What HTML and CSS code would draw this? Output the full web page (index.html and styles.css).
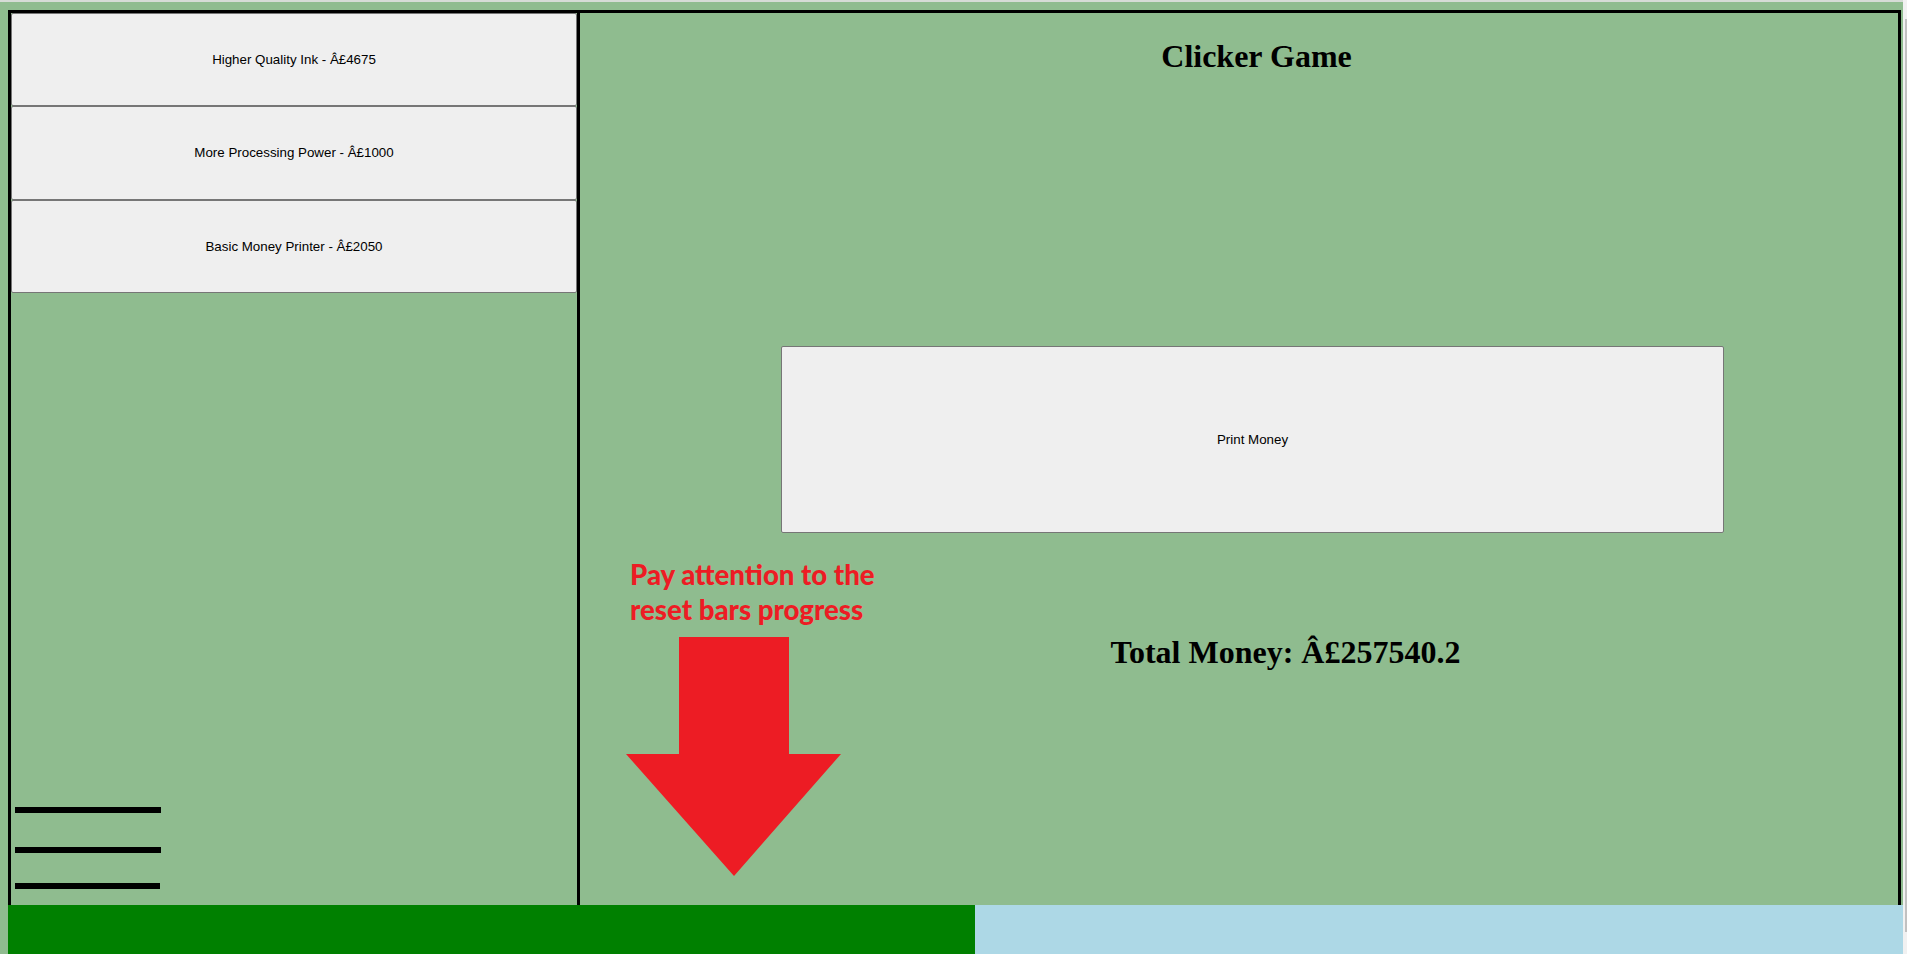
FILE: index.html
```html
<!DOCTYPE html>
<html lang="en">
<head>
<meta charset="utf-8">
<title>Clicker Game</title>
<link rel="stylesheet" href="styles.css">
</head>
<body>
  <div class="viewport">
    <div class="game">
      <div class="shop">
        <button class="upgrade">Higher Quality Ink - Â£4675</button>
        <button class="upgrade">More Processing Power - Â£1000</button>
        <button class="upgrade">Basic Money Printer - Â£2050</button>
        <div class="lines">
          <div class="line l1"></div>
          <div class="line l2"></div>
          <div class="line l3"></div>
        </div>
      </div>
      <div class="main">
        <h1 class="title">Clicker Game</h1>
        <button class="print">Print Money</button>
        <h1 class="total">Total Money: Â£257540.2</h1>
      </div>
    </div>
    <div class="bars">
      <div class="bar-done"></div>
      <div class="bar-rest"></div>
    </div>
  </div>
  <div class="scrollbar"><div class="thumb"></div></div>

  <div class="note">Pay attention to the<br>reset bars progress</div>
  <svg class="arrow" width="230" height="250" viewBox="0 0 230 250">
    <polygon points="59,7 169,7 169,124 221,124 114,246 6,124 59,124" fill="#ed1c24"/>
  </svg>
</body>
</html>
```

FILE: styles.css
```css
html, body {
  margin: 0;
  padding: 0;
  height: 954px;
  overflow: hidden;
}

body {
  position: relative;
  display: flex;
  background: #8fbc8f;
  font-family: "Liberation Serif", "Times New Roman", serif;
}

.viewport {
  flex: 1;
  display: flex;
  flex-direction: column;
  border-top: 2px solid #d6dcd6;
  padding: 8px 0 0 8px;
  box-sizing: border-box;
}

.game {
  display: flex;
  width: 1893px;
  height: 895px;
}

.shop {
  width: 572px;
  box-sizing: border-box;
  border: 3px solid #000;
  border-bottom: 0;
  display: flex;
  flex-direction: column;
}

.upgrade {
  height: 93.33px;
  width: 100%;
  margin: 0;
  padding: 0;
  background: #efefef;
  border: 1px solid #767676;
  border-radius: 2px;
  font-family: "Liberation Sans", Arial, sans-serif;
  font-size: 13.33px;
  color: #000;
}

.lines {
  margin-top: auto;
  padding: 0 0 16px 4px;
}

.line {
  width: 146px;
  height: 6px;
  background: #000;
}

.l2 { margin-top: 34px; }
.l3 { margin-top: 30px; width: 145px; }

.main {
  flex: 1;
  box-sizing: border-box;
  border-top: 3px solid #000;
  border-right: 3px solid #000;
  display: flex;
  flex-direction: column;
  align-items: flex-start;
}

.title {
  align-self: stretch;
  margin: 25px 0 0;
  padding-left: 35px;
  font-size: 32px;
  line-height: 36px;
  font-weight: bold;
  text-align: center;
}

.print {
  margin: 272px 0 0 201px;
  width: 943px;
  height: 187px;
  padding: 0;
  background: #efefef;
  border: 1px solid #767676;
  border-radius: 2px;
  font-family: "Liberation Sans", Arial, sans-serif;
  font-size: 13.33px;
  color: #000;
}

.total {
  align-self: stretch;
  margin: 101px 0 0;
  padding-left: 93px;
  font-size: 32px;
  line-height: 36px;
  font-weight: bold;
  text-align: center;
}

.bars {
  display: flex;
  width: 1895px;
  height: 49px;
}

.bar-done {
  width: 967px;
  background: #008000;
}

.bar-rest {
  flex: 1;
  background: #add8e6;
}

.scrollbar {
  width: 4px;
  background: #f1f1f1;
}

.thumb {
  margin: 19px 0 0 2px;
  width: 2px;
  height: 913px;
  background: #c1c1c1;
}

.note {
  position: absolute;
  left: 630px;
  top: 557px;
  font-family: Lato, "Open Sans", sans-serif;
  font-weight: 900;
  font-size: 27.6px;
  line-height: 35px;
  color: #ed1c24;
  white-space: nowrap;
}

.arrow {
  position: absolute;
  left: 620px;
  top: 630px;
}
```
